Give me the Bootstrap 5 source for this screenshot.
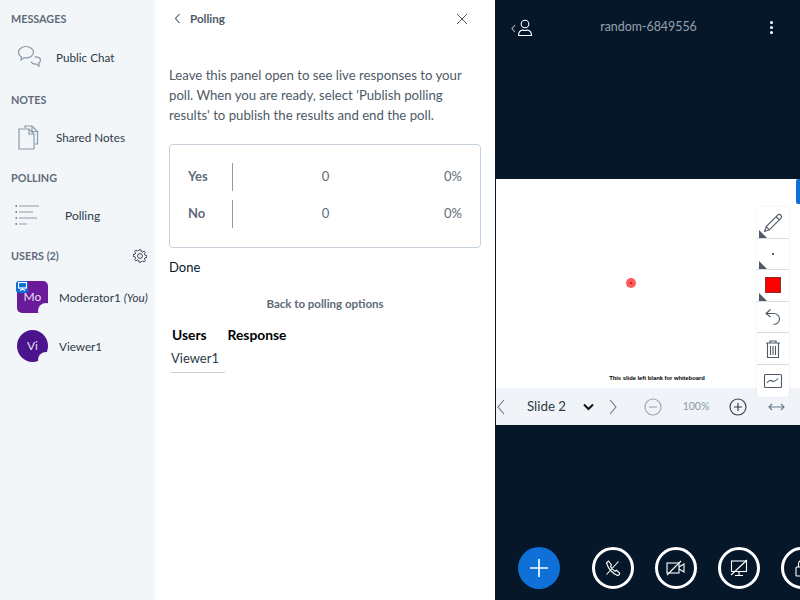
<!DOCTYPE html>
<html lang="en">
<head>
    <meta charset="UTF-8">
    <title>Polling</title>
    <link href="https://cdn.jsdelivr.net/npm/bootstrap@5.3.0/dist/css/bootstrap.min.css" rel="stylesheet">
    <style>
        html, body { height: 600px; overflow: hidden; }
        body { font-family: "Lato", "Liberation Sans", sans-serif; color: #06172a; background: #06172a; }
        .app-shell { width: 800px; height: 600px; overflow: hidden; }

        .side-nav { width: 155px; background: #f3f6f9; color: #2d3a47; flex: none; }
        .side-title { font-size: 10.8px; font-weight: 700; color: #5f6b79; line-height: 14px; padding-left: 11px; }
        .side-item { font-size: 11.7px; line-height: 16px; color: #2d3a47; }
        .side-item svg { flex: none; fill: none; stroke: #8b9aa9; stroke-width: 1.2; }
        .side-item svg .dot-col { stroke-width: 2.2; stroke: #7d8c9b; }
        .chat-row { height: 38px; padding: 0 0 0 17px; margin-top: 12px; gap: 14px; }
        .notes-row { height: 42px; padding: 0 0 0 17px; margin-top: 9px; gap: 14px; }
        .poll-row { height: 36px; padding: 0 0 0 15px; margin-top: 13px; gap: 25px; font-size: 12px; }
        .users-head { padding-right: 8px; margin-top: 15px; }
        .user-row { padding-left: 17px; gap: 11px; height: 49px; }
        .user-face { width: 31px; height: 32px; color: #e9dff0; font-size: 12px; flex: none; }
        .face-mod { background: #6a1b9a; border-radius: 5px; }
        .face-view { background: #4a148c; border-radius: 50%; }
        .face-notch { width: 16px; height: 16px; right: -6px; bottom: -6px; background: #f3f6f9; border-radius: 50%; }
        .presenter-tag { width: 12px; height: 12px; left: -1px; top: 0; background: #0f70d7; border-radius: 3px; }

        .poll-panel { width: 340px; background: #fff; flex: none; padding: 0 14px; }
        .panel-top { height: 38px; color: #4e5a66; font-size: 11.6px; font-weight: 700; }
        .panel-back { gap: 9px; padding-left: 5px; }
        .panel-close { margin-right: 13px; }
        .panel-note { margin: 27px 0 19px; font-size: 13.2px; line-height: 20px; color: #4e5a66; }
        .live-box { height: 104px; border: 1px solid #c8d2dc; border-radius: 4px; padding: 18px 18px 0 18px; color: #5f6b79; font-size: 13px; }
        .live-row { height: 28px; margin-bottom: 9px; }
        .live-key { width: 45px; height: 28px; font-weight: 700; border-right: 1px solid #8b9aa9; line-height: 26px; flex: none; }
        .live-num { flex: 1; text-align: center; padding-right: 4px; }
        .live-pct { width: 40px; text-align: right; }
        .done-text { font-size: 13px; line-height: 20px; margin-top: 9px; color: #06172a; }
        .back-link { font-size: 11.5px; font-weight: 700; color: #5f6b79; text-align: center; margin-top: 19px; line-height: 16px; }
        .votes-head { font-size: 13.8px; font-weight: 700; color: #000; margin-top: 14px; padding-left: 3px; gap: 21px; line-height: 18px; }
        .votes-name { font-size: 13px; color: #2d3a47; width: 54px; margin: 4px 0 0 2px; padding-bottom: 4px; line-height: 20px; border-bottom: 1px solid #c8d2dc; }

        .stage { width: 305px; flex: none; background: #06172a; border-left: 1px solid #06172a; }
        .stage-top { height: 55px; padding: 0 27px 0 15px; color: #fff; }
        .room-name { font-size: 12.4px; color: #98a2ac; margin-right: 6px; }
        .menu-dots { width: 3px; }
        .menu-dots i { width: 3px; height: 3px; border-radius: 50%; background: #fff; display: block; margin: 2px 0; }
        .slide-wrap { margin-top: 124px; height: 209px; background: #fff; }
        .slide-dot { left: 130px; top: 99px; width: 10px; height: 10px; background: #ff5a5a; border-radius: 50%; }
        .slide-dot::after { content: ""; position: absolute; left: 4px; top: 4px; width: 2px; height: 2px; background: #c22; }
        .slide-caption { left: 0; right: 0; bottom: 5px; padding: 0 9px 0 27px; text-align: center; font-size: 5.8px; font-weight: 700; color: #000; font-family: "Liberation Sans", sans-serif; }
        .scroll-tab { right: 0; top: 0; width: 4px; height: 25px; background: #0f70d7; border-radius: 2px 0 0 2px; }
        .tool-stack { left: 261px; top: 28px; width: 32px; background: #fff; border-radius: 4px; box-shadow: 0 0 3px rgba(0,0,0,.08); z-index: 2; }
        .tool-cell { height: 31.6px; border-bottom: 1px solid #d5dce3; }
        .tool-cell:last-child { border-bottom: 0; }
        .tool-cell svg { fill: none; stroke: #4e5a66; stroke-width: 1.1; }
        .tool-corner { left: 2px; bottom: 0; width: 0; height: 0; border-left: 8px solid transparent; border-bottom: 8px solid #4e5a66; transform: scaleX(-1); }
        .size-dot { width: 2px; height: 2px; background: #333; border-radius: 50%; }
        .color-box { width: 16px; height: 16px; background: #f00; border: 1px solid #8a3030; }
        .slide-bar { height: 37px; background: #f0f4f8; color: #2d3a47; font-size: 13.3px; }
        .slide-bar svg { fill: none; stroke: #6b7885; stroke-width: 1.1; flex: none; }
        .slide-bar .bar-minus { stroke: #98a4b0; }
        .slide-pick { width: 44px; margin-left: 21px; white-space: nowrap; }
        .bar-drop { margin-left: 11.5px; stroke: #111 !important; stroke-width: 2 !important; }
        .bar-next { margin-left: 14.5px; }
        .bar-minus { margin-left: 26px; }
        .zoom-val { font-size: 10.5px; color: #8b9aa9; width: 28px; text-align: center; margin-left: 20px; }
        .bar-plus { margin-left: 19px; stroke: #2d3a47 !important; }
        .bar-fit { margin-left: 20.5px; }
        .stage-actions { margin-top: auto; height: 53px; padding-left: 22px; gap: 21px; margin-bottom: 6px; }
        .round-act { width: 42px; height: 42px; border: 3px solid #fff; border-radius: 50%; background: transparent; padding: 0; flex: none; }
        .round-act svg { fill: none; stroke: #fff; stroke-width: 1.1; }
        .add-act { background: #0f70d7; border: 0; margin-right: 11px; }
    </style>
</head>
<body>
    <div class="app-shell d-flex">
        <div class="side-nav">
            <div class="side-title" style="margin-top:12px">MESSAGES</div>
            <div class="side-item chat-row d-flex align-items-center">
                <svg width="25" height="24" viewBox="0 0 25 24"><path d="M9 1.5c-4.2 0-7.5 2.5-7.5 5.800 0 2 1.200 3.600 3 4.700l-.5 3 3.300-2.400c.8.200 1.600.200 2.400.200 3.900-.2 6.800-2.700 6.800-5.700S13 1.500 9 1.500Z"/><path d="M17.500 12c2.800-.5 6 .5 6 3.200 0 1.300-.8 2.300-1.800 3l.4 2.800-2.800-2c-2.300.2-4.600-.7-5.100-2.400"/></svg>
                <span>Public Chat</span>
            </div>
            <div class="side-title" style="margin-top:17px">NOTES</div>
            <div class="side-item notes-row d-flex align-items-center">
                <svg width="25" height="26" viewBox="0 0 25 26"><path d="M8 4V2h7l5.500 5.500V20h-3"/><path d="M15 2v5.500h5.500"/><path d="M2 5h10l5 5v15H2Z"/><path d="M12 5v5h5"/></svg>
                <span>Shared Notes</span>
            </div>
            <div class="side-title" style="margin-top:13px">POLLING</div>
            <div class="side-item poll-row d-flex align-items-center">
                <svg width="25" height="24" viewBox="0 0 25 24"><path d="M4 2h20M4 8h14M4 14h18M4 20h8"/><path class="dot-col" d="M.5 2h1.500M.5 8h1.500M.5 14h1.500M.5 20h1.500"/></svg>
                <span>Polling</span>
            </div>
            <div class="users-head side-title d-flex justify-content-between align-items-center">
                <span>USERS (2)</span>
                <svg width="14" height="14" viewBox="0 0 14 14" fill="none" stroke="#3b4752" stroke-width="1"><circle cx="7" cy="7" r="2.400"/><path d="M6 .8h2l.3 1.700 1.300.6 1.500-1 1.300 1.400-1 1.400.6 1.300 1.700.3v2l-1.700.3-.6 1.300 1 1.500-1.300 1.300-1.500-1-1.300.6L8 13.200H6l-.3-1.700-1.300-.6-1.500 1-1.300-1.300 1-1.500-.6-1.300-1.700-.3v-2l1.700-.3.6-1.300-1-1.400 1.300-1.400 1.500 1 1.300-.6Z"/></svg>
            </div>
            <div class="side-item user-row d-flex align-items-center" style="margin-top:9px">
                <div class="user-face face-mod position-relative d-flex align-items-center justify-content-center">
                    Mo
                    <span class="face-notch position-absolute"></span>
                    <span class="presenter-tag position-absolute d-flex align-items-center justify-content-center">
                        <svg width="9" height="9" viewBox="0 0 9 9" style="stroke:#fff"><rect x=".5" y=".5" width="8" height="5.500"/><path d="M4.500 6v1.500M2 8.500l2.500-1.500 2.500 1.500"/></svg>
                    </span>
                </div>
                <span class="text-nowrap">Moderator1 <em>(You)</em></span>
            </div>
            <div class="side-item user-row d-flex align-items-center">
                <div class="user-face face-view position-relative d-flex align-items-center justify-content-center">
                    Vi
                    <span class="face-notch position-absolute"></span>
                </div>
                <span>Viewer1</span>
            </div>
        </div>

        <div class="poll-panel">
            <div class="panel-top d-flex justify-content-between align-items-center">
                <div class="panel-back d-flex align-items-center">
                    <svg width="7" height="11" viewBox="0 0 7 11" fill="none" stroke="#4e5a66" stroke-width="1.100"><path d="M5.500 1 1.500 5.500 5.500 10"/></svg>
                    <span>Polling</span>
                </div>
                <svg class="panel-close" width="12" height="12" viewBox="0 0 12 12" fill="none" stroke="#4e5a66" stroke-width="1"><path d="M1 1l10 10M11 1 1 11"/></svg>
            </div>
            <p class="panel-note">Leave this panel open to see live responses to your poll. When you are ready, select 'Publish polling results' to publish the results and end the poll.</p>
            <div class="live-box">
                <div class="live-row d-flex align-items-center"><div class="live-key">Yes</div><div class="live-num">0</div><div class="live-pct">0%</div></div>
                <div class="live-row d-flex align-items-center"><div class="live-key">No</div><div class="live-num">0</div><div class="live-pct">0%</div></div>
            </div>
            <div class="done-text">Done</div>
            <div class="back-link">Back to polling options</div>
            <div class="votes-head d-flex"><span>Users</span><span>Response</span></div>
            <div class="votes-name">Viewer1</div>
        </div>

        <div class="stage d-flex flex-column">
            <div class="stage-top d-flex align-items-center justify-content-between">
                <svg width="22" height="18" viewBox="0 0 22 18" fill="none" stroke="#fff" stroke-width="1.100"><path d="M4 6 1 9.500 4 13" stroke="#aab3bc"/><circle cx="14" cy="5" r="3.800"/><path d="M7.500 16.500c0-3.500 2-5 3.800-5.500 1.700.6 3.700.6 5.400 0 1.800.5 3.800 2 3.800 5.500Z"/></svg>
                <span class="room-name">random-6849556</span>
                <span class="menu-dots"><i></i><i></i><i></i></span>
            </div>
            <div class="slide-wrap position-relative">
                <span class="slide-dot position-absolute"></span>
                <span class="slide-caption position-absolute">This slide left blank for whiteboard</span>
                <span class="scroll-tab position-absolute"></span>
                <div class="tool-stack position-absolute">
                    <div class="tool-cell position-relative d-flex align-items-center justify-content-center">
                        <svg width="21" height="21" viewBox="0 0 20 20"><path d="M3 14 14 3c1-1 2.200-1 3 0s1 2 0 3L6 17l-4.500 1.500ZM12.500 4.500l3 3M3 14l3 3"/></svg>
                        <span class="tool-corner position-absolute"></span>
                    </div>
                    <div class="tool-cell position-relative d-flex align-items-center justify-content-center">
                        <span class="size-dot"></span>
                        <span class="tool-corner position-absolute"></span>
                    </div>
                    <div class="tool-cell position-relative d-flex align-items-center justify-content-center">
                        <span class="color-box"></span>
                        <span class="tool-corner position-absolute"></span>
                    </div>
                    <div class="tool-cell d-flex align-items-center justify-content-center">
                        <svg width="18" height="18" viewBox="0 0 18 18"><path d="M6.500 1.500 2 5.500l4.500 3.500M2 5.500h7.500c3.500 0 6 2.500 6 5.500s-2.500 5.500-6 5.500"/></svg>
                    </div>
                    <div class="tool-cell d-flex align-items-center justify-content-center">
                        <svg width="18" height="20" viewBox="0 0 18 20"><path d="M2 4h14M6 4V2h6v2M3.500 4v14.500h11V4M6.500 7v9M9 7v9M11.500 7v9"/></svg>
                    </div>
                    <div class="tool-cell d-flex align-items-center justify-content-center">
                        <svg width="20" height="16" viewBox="0 0 20 16"><rect x="1.500" y="1.500" width="17" height="13" rx="1"/><path d="M4 10c2-3 3.500-3 5-2s3 1 6-2.500"/></svg>
                    </div>
                </div>
            </div>
            <div class="slide-bar d-flex align-items-center">
                <svg width="10" height="16" viewBox="0 0 10 16"><path d="M8 1 2 8l6 7"/></svg>
                <span class="slide-pick">Slide 2</span>
                <svg class="bar-drop" width="11" height="8" viewBox="0 0 11 8"><path d="M1 1.500l4.500 4.500L10 1.500"/></svg>
                <svg class="bar-next" width="10" height="16" viewBox="0 0 10 16"><path d="M2 1l6 7-6 7"/></svg>
                <svg class="bar-minus" width="18" height="18" viewBox="0 0 18 18"><circle cx="9" cy="9" r="8"/><path d="M5 9h8"/></svg>
                <span class="zoom-val">100%</span>
                <svg class="bar-plus" width="18" height="18" viewBox="0 0 18 18"><circle cx="9" cy="9" r="8"/><path d="M5 9h8M9 5v8"/></svg>
                <svg class="bar-fit" width="17" height="8" viewBox="0 0 17 8"><path d="M1 4h15M4 1 1 4l3 3M13 1l3 3-3 3"/></svg>
            </div>
            <div class="stage-actions d-flex align-items-center">
                <button class="round-act add-act d-flex align-items-center justify-content-center">
                    <svg width="20" height="20" viewBox="0 0 20 20" style="stroke-width:1.600"><path d="M10 1v18M1 10h18"/></svg>
                </button>
                <button class="round-act d-flex align-items-center justify-content-center">
                    <svg width="16" height="16" viewBox="0 0 16 16"><path d="M1.500 3 3.500 1 6.500 5 5.500 6.500c1 2 2.500 3.500 4.500 4.800l1.500-1 3 2.700c.5 1.500-1 2.800-2.500 2.200C8 13.500 3.500 9 1.500 3ZM1.500 14.500 13.500 1.500"/></svg>
                </button>
                <button class="round-act d-flex align-items-center justify-content-center">
                    <svg width="20" height="16" viewBox="0 0 20 16"><rect x="1" y="3" width="12" height="10"/><path d="M13 7l5-3v8l-5-3M1 15 15 1"/></svg>
                </button>
                <button class="round-act d-flex align-items-center justify-content-center">
                    <svg width="18" height="18" viewBox="0 0 18 18"><rect x="1.500" y="2" width="15" height="10.500"/><path d="M9 12.500V16M5 16.500h8M1 16 17 1"/></svg>
                </button>
                <button class="round-act d-flex align-items-center justify-content-center">
                    <svg width="16" height="18" viewBox="0 0 16 18"><rect x="2" y="8" width="12" height="9" rx="1"/><path d="M4.500 8V5a3.500 3.500 0 0 1 7 0v3"/></svg>
                </button>
            </div>
        </div>
    </div>
    <script src="https://cdn.jsdelivr.net/npm/bootstrap@5.3.0/dist/js/bootstrap.bundle.min.js"></script>
</body>
</html>
